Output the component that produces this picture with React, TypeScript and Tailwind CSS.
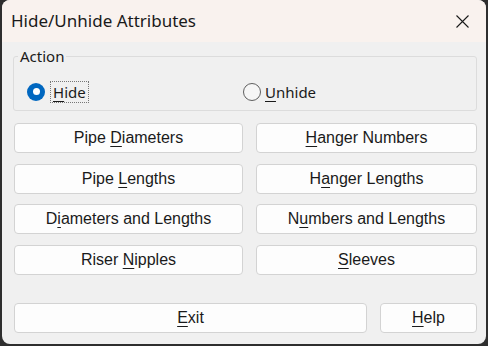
const Mn = ({ children }: { children: React.ReactNode }) => (
  <span className="underline decoration-1 underline-offset-[3px]">{children}</span>
);

const Btn = ({ w, children }: { w: string; children: React.ReactNode }) => (
  <button
    type="button"
    className={`${w} h-[30px] shrink-0 rounded-[4px] border border-[#d3d3d3] bg-[#fdfdfd] text-[16px] leading-none text-[#1a1a1a]`}
  >
    {children}
  </button>
);

const App = () => {
  return (
    <div className="h-[346px] w-[488px] bg-[#2e2e2e] px-[2px] pb-[2px]">
      <div className="flex h-full flex-col overflow-hidden rounded-[8px] bg-[#f0f0f0] font-['Liberation_Sans',Arial,sans-serif]">
        {/* Title bar */}
        <div className="flex h-[42px] shrink-0 items-center justify-between bg-[#f9f2ee] pl-[9px] pr-[17px]">
          <span className="font-['Noto_Sans',sans-serif] text-[17px] text-[#1a1a1a]">
            Hide/Unhide Attributes
          </span>
          <svg width="13" height="13" viewBox="0 0 13 13" className="mt-[1px]">
            <path d="M0.5 0.5 L12.5 12.5 M12.5 0.5 L0.5 12.5" stroke="#1a1a1a" strokeWidth="1.1" />
          </svg>
        </div>

        <div className="flex flex-col pl-[11px] pr-[9px]">
          {/* Group box */}
          <div className="relative mt-[14px] h-[55px] w-[464px] rounded-[3px] border border-[#dcdcdc]">
            <span className="absolute -top-[11px] left-[4px] bg-[#f0f0f0] px-[2px] font-['Noto_Sans',sans-serif] text-[15px] leading-[20px] text-[#1a1a1a]">
              Action
            </span>
            <div className="flex h-full items-center pt-[16px]">
              <div className="ml-[13px] flex w-[216px] items-center">
                <span className="flex h-[18px] w-[18px] items-center justify-center rounded-full bg-[#0067c0]">
                  <span className="h-[7px] w-[7px] rounded-full bg-white" />
                </span>
                <span className="ml-[5px] border border-dotted border-[#777] px-[2px] font-['Noto_Sans',sans-serif] text-[15px] leading-[20px] text-[#1a1a1a]">
                  <Mn>H</Mn>ide
                </span>
              </div>
              <div className="flex items-center">
                <span className="h-[18px] w-[18px] rounded-full border border-[#5f5f5f] bg-[#f6f6f6]" />
                <span className="ml-[4px] font-['Noto_Sans',sans-serif] text-[15px] leading-[20px] text-[#1a1a1a]">
                  <Mn>U</Mn>nhide
                </span>
              </div>
            </div>
          </div>

          {/* Buttons grid */}
          <div className="ml-[1px] mt-[12px] flex flex-col gap-[10.7px]">
            <div className="flex gap-[13px]">
              <Btn w="w-[229px]">Pipe <Mn>D</Mn>iameters</Btn>
              <Btn w="w-[221px]"><Mn>H</Mn>anger Numbers</Btn>
            </div>
            <div className="flex gap-[13px]">
              <Btn w="w-[229px]">Pipe <Mn>L</Mn>engths</Btn>
              <Btn w="w-[221px]">H<Mn>a</Mn>nger Lengths</Btn>
            </div>
            <div className="flex gap-[13px]">
              <Btn w="w-[229px]">D<Mn>i</Mn>ameters and Lengths</Btn>
              <Btn w="w-[221px]">N<Mn>u</Mn>mbers and Lengths</Btn>
            </div>
            <div className="flex gap-[13px]">
              <Btn w="w-[229px]">Riser <Mn>N</Mn>ipples</Btn>
              <Btn w="w-[221px]"><Mn>S</Mn>leeves</Btn>
            </div>
          </div>

          {/* Footer */}
          <div className="ml-[1px] mt-[28px] flex gap-[13px]">
            <Btn w="w-[353px]"><Mn>E</Mn>xit</Btn>
            <Btn w="w-[97px]"><Mn>H</Mn>elp</Btn>
          </div>
        </div>
      </div>
    </div>
  );
};

export default App;
